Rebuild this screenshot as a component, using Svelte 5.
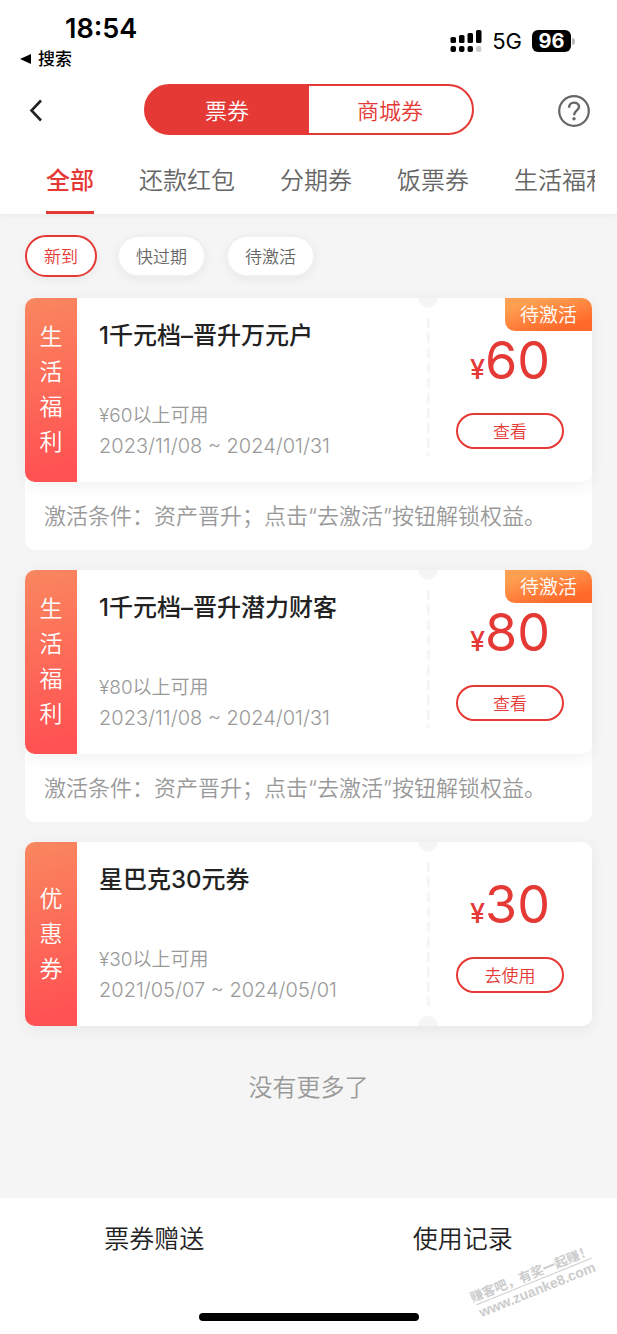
<script lang="ts">
	type Coupon = {
		kind: string;
		title: string;
		amount: number;
		period: string;
		action: string;
		tag?: string;
		note?: string;
	};

	const tabs = ['全部', '还款红包', '分期券', '饭票券', '生活福利'];
	const filters = ['新到', '快过期', '待激活'];

	const coupons: Coupon[] = [
		{
			kind: '生活福利',
			title: '1千元档–晋升万元户',
			amount: 60,
			period: '2023/11/08 ~ 2024/01/31',
			action: '查看',
			tag: '待激活',
			note: '激活条件：资产晋升；点击“去激活”按钮解锁权益。'
		},
		{
			kind: '生活福利',
			title: '1千元档–晋升潜力财客',
			amount: 80,
			period: '2023/11/08 ~ 2024/01/31',
			action: '查看',
			tag: '待激活',
			note: '激活条件：资产晋升；点击“去激活”按钮解锁权益。'
		},
		{
			kind: '优惠券',
			title: '星巴克30元券',
			amount: 30,
			period: '2021/05/07 ~ 2024/05/01',
			action: '去使用'
		}
	];

	let source = $state('票券');
	let activeTab = $state('全部');
	let activeFilter = $state('新到');
</script>

<div class="page">
	<header>
		<div class="status">
			<div class="status-left">
				<span class="time">18:54</span>
				<a class="return" href="#search">
					<svg width="12" height="12" viewBox="0 0 12 12"><path d="M0 6 L11 1 V11 Z" /></svg>
					搜索
				</a>
			</div>
			<div class="status-right">
				<svg width="32" height="22" viewBox="0 0 32 22">
					<rect x="0.500" y="7" width="5.500" height="6" rx="1.500" />
					<rect x="9" y="5" width="5.500" height="8" rx="1.500" />
					<rect x="17.500" y="3" width="5.500" height="10" rx="1.500" />
					<rect x="26" y="0" width="5.500" height="13" rx="1.500" />
					<rect x="0.500" y="16" width="5.500" height="6" rx="2" />
					<rect x="9" y="16" width="5.500" height="6" rx="2" />
					<rect x="17.500" y="16" width="5.500" height="6" rx="2" />
					<rect x="26" y="16" width="5.500" height="6" rx="2" fill="#ccc" />
				</svg>
				<span class="network">5G</span>
				<span class="battery">96</span>
			</div>
		</div>

		<nav class="topbar">
			<button class="icon" aria-label="返回">
				<svg width="32" height="32" viewBox="0 0 32 32">
					<path d="M14 5.500 L4.500 15.500 L14 25.500" fill="none" stroke="#222" stroke-width="2.600" />
				</svg>
			</button>
			<div class="switch">
				{#each ['票券', '商城券'] as name}
					<button class:on={source === name} onclick={() => (source = name)}>{name}</button>
				{/each}
			</div>
			<button class="icon" aria-label="帮助">
				<svg width="32" height="32" viewBox="0 0 32 32" fill="none" stroke="#666">
					<circle cx="16" cy="16" r="14.800" stroke-width="2.200" />
					<path
						d="M11 12.800 C11 6 21 6 21 12 C21 15.200 16 15.800 16 20.200"
						stroke-width="2.400"
					/>
					<circle cx="16" cy="23.700" r="1.700" fill="#666" stroke="none" />
				</svg>
			</button>
		</nav>

		<div class="tabs">
			{#each tabs as tab}
				<button class:on={activeTab === tab} onclick={() => (activeTab = tab)}>{tab}</button>
			{/each}
		</div>
	</header>

	<main>
		<div class="filters">
			{#each filters as filter}
				<button class:on={activeFilter === filter} onclick={() => (activeFilter = filter)}>
					{filter}
				</button>
			{/each}
		</div>

		{#each coupons as coupon}
			<article>
				<div class="ticket">
					<div class="kind"><span>{coupon.kind}</span></div>
					<div class="info">
						<h2>{coupon.title}</h2>
						<div>
							<p>¥{coupon.amount}以上可用</p>
							<p class="period">{coupon.period}</p>
						</div>
					</div>
					<div class="tear" class:short={coupon.note}>
						<i class="notch top"></i>
						<i class="dashes"></i>
						{#if !coupon.note}
							<i class="notch bottom"></i>
						{/if}
					</div>
					<div class="value">
						<div class="price"><small>¥</small>{coupon.amount}</div>
						<button>{coupon.action}</button>
					</div>
					{#if coupon.tag}
						<span class="tag">{coupon.tag}</span>
					{/if}
				</div>
				{#if coupon.note}
					<p class="note">{coupon.note}</p>
				{/if}
			</article>
		{/each}

		<p class="end">没有更多了</p>
	</main>

	<footer>
		<div class="links">
			<a href="#gift">票券赠送</a>
			<a href="#history">使用记录</a>
		</div>
		<div class="home"></div>
		<div class="watermark">
			<span>赚客吧，有奖一起赚！</span>
			<b>www.zuanke8.com</b>
		</div>
	</footer>
</div>

<style>
	:global(body) {
		margin: 0;
		background: #f5f5f5;
	}

	.page {
		--red: #e53935;
		display: flex;
		flex-direction: column;
		min-height: 100vh;
		overflow: hidden;
		color: #222;
		font-family: Inter, 'Noto Sans CJK SC', sans-serif;
		font-weight: 350;
	}

	button {
		padding: 0 0 2px;
		border: none;
		background: none;
		color: inherit;
		font: inherit;
		cursor: pointer;
	}

	a {
		color: inherit;
		text-decoration: none;
	}

	h2,
	p {
		margin: 0;
	}

	svg {
		display: block;
	}

	header {
		background: #fff;
		box-shadow: 0 1px 6px rgba(0, 0, 0, 0.06);
	}

	/* status bar */
	.status {
		display: flex;
		justify-content: space-between;
		height: 84px;
		padding: 0 46px 0 20px;
		box-sizing: border-box;
		color: #000;
	}

	.status-left {
		display: flex;
		flex-direction: column;
		padding-top: 12px;
	}

	.time {
		padding-left: 45px;
		font-size: 27px;
		font-weight: 600;
		line-height: 34px;
	}

	.return {
		display: flex;
		align-items: center;
		gap: 6px;
		font-size: 17px;
		font-weight: 500;
		line-height: 26px;
	}

	.status-right {
		display: flex;
		align-items: center;
		gap: 10px;
		height: 82px;
	}

	.network {
		font-size: 22px;
		font-weight: 400;
	}

	.battery {
		position: relative;
		width: 39px;
		border-radius: 6px;
		background: #000;
		color: #fff;
		font-size: 20px;
		font-weight: 700;
		line-height: 22px;
		text-align: center;
	}

	.battery::after {
		content: '';
		position: absolute;
		top: 8px;
		right: -4px;
		width: 3px;
		height: 7px;
		border-radius: 0 3px 3px 0;
		background: #bbb;
	}

	/* title row */
	.topbar {
		display: flex;
		align-items: center;
		justify-content: space-between;
		padding: 0 27px;
	}

	.icon {
		flex-shrink: 0;
		padding: 2px 0 0;
	}

	.switch {
		display: flex;
		flex: 0 1 330px;
		height: 51px;
		border: 2px solid var(--red);
		border-radius: 26px;
		box-sizing: border-box;
		overflow: hidden;
		background: var(--red);
		color: var(--red);
		font-size: 22px;
	}

	.switch button {
		flex: 1;
		background: #fff;
	}

	.switch .on {
		background: var(--red);
		color: #fff;
	}

	.tabs {
		display: flex;
		gap: 45px;
		margin: 0 22px;
		padding: 28px 0 0 24px;
		overflow: hidden;
		color: #666;
		font-size: 24px;
		line-height: 36px;
	}

	.tabs button {
		flex-shrink: 0;
		padding-bottom: 12px;
		border-bottom: 3px solid transparent;
		white-space: nowrap;
	}

	.tabs .on {
		border-color: var(--red);
		color: var(--red);
		font-weight: 500;
	}

	main {
		flex: 1;
		padding: 21px 25px;
	}

	.filters {
		display: flex;
		gap: 20px;
		margin-bottom: 21px;
		color: #666;
		font-size: 17px;
	}

	.filters button {
		height: 42px;
		padding: 0 17px 2px;
		border: 2px solid #f0f0f0;
		border-radius: 21px;
		background: #fff;
		box-shadow: 0 3px 10px rgba(0, 0, 0, 0.05);
	}

	.filters .on {
		border-color: var(--red);
		color: var(--red);
	}

	/* coupons */
	article {
		margin-bottom: 20px;
		border-radius: 10px;
		background: #fff;
	}

	.ticket {
		position: relative;
		display: flex;
		height: 184px;
		border-radius: 10px;
		background: #fff;
		box-shadow: 0 4px 16px rgba(0, 0, 0, 0.06);
	}

	.kind {
		display: flex;
		align-items: center;
		justify-content: center;
		width: 52px;
		border-radius: 10px 0 0 10px;
		background: linear-gradient(165deg, #fa875f, #ff5353 90%);
		color: #fff;
		font-size: 23px;
		line-height: 35px;
	}

	.kind span {
		width: 23px;
		word-break: break-all;
	}

	.info {
		display: flex;
		flex: 1;
		flex-direction: column;
		justify-content: space-between;
		padding: 20px 0 21px 22px;
	}

	h2 {
		font-size: 24px;
		font-weight: 500;
		line-height: 36px;
	}

	.info p {
		color: #999;
		font-size: 19px;
		line-height: 30px;
	}

	.info .period {
		font-size: 20px;
	}

	.tear {
		display: flex;
		flex-direction: column;
		align-items: center;
		gap: 10px;
		width: 20px;
	}

	.tear.short {
		padding-bottom: 26px;
	}

	.notch {
		width: 20px;
		height: 10px;
		background: #f5f5f5;
	}

	.notch.top {
		border-radius: 0 0 10px 10px;
	}

	.notch.bottom {
		border-radius: 10px 10px 0 0;
	}

	.dashes {
		flex: 1;
		width: 3px;
		background: repeating-linear-gradient(#f5f5f5 0 10px, transparent 10px 15px);
	}

	.value {
		display: flex;
		flex-direction: column;
		align-items: center;
		width: 154px;
		padding: 31px 10px 0 0;
		box-sizing: border-box;
		color: var(--red);
	}

	.price {
		margin-bottom: 11px;
		font-size: 52px;
		font-weight: 400;
		line-height: 64px;
	}

	.price small {
		font-size: 27px;
		font-weight: 500;
	}

	.value button {
		width: 108px;
		height: 36px;
		border: 2px solid var(--red);
		border-radius: 18px;
		font-size: 17px;
	}

	.tag {
		position: absolute;
		top: 0;
		right: 0;
		padding: 2px 15px 0;
		border-radius: 0 10px 0 10px;
		background: linear-gradient(165deg, #ff9f50 20%, #ff6a2b 80%);
		color: #fff;
		font-size: 19px;
		line-height: 31px;
	}

	.note {
		padding: 17px 19px;
		color: #999;
		font-size: 22px;
		line-height: 34px;
	}

	.end {
		margin-top: 45px;
		color: #999;
		font-size: 24px;
		line-height: 34px;
		text-align: center;
	}

	footer {
		position: relative;
		display: flex;
		flex-direction: column;
		justify-content: space-between;
		height: 136px;
		background: #fff;
	}

	.links {
		display: flex;
		font-size: 25px;
		line-height: 82px;
		text-align: center;
	}

	.links a {
		flex: 1;
	}

	.home {
		width: 220px;
		height: 8px;
		margin: 0 auto 13px;
		border-radius: 4px;
		background: #000;
	}

	.watermark {
		position: absolute;
		right: 18px;
		bottom: 36px;
		display: flex;
		flex-direction: column;
		align-items: center;
		transform: rotate(-22deg);
		color: #ccc;
		font-size: 13px;
		font-weight: 700;
		line-height: 16px;
	}

	.watermark b {
		border-top: 1px solid #ccc;
		font-family: 'Liberation Sans', sans-serif;
		font-size: 14px;
	}
</style>
